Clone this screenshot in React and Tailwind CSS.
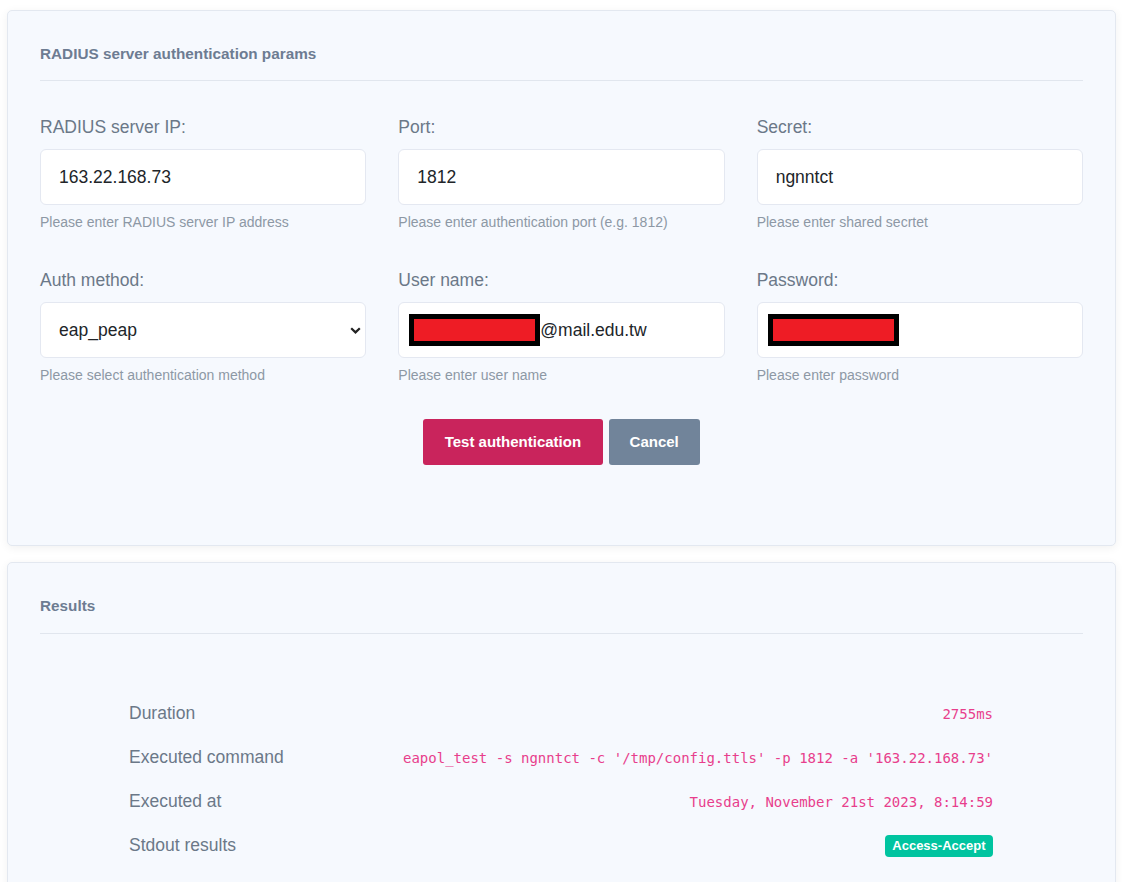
import { useState } from "react";

const FIELDS = [
  { key: "ip", label: "RADIUS server IP:", value: "163.22.168.73", help: "Please enter RADIUS server IP address" },
  { key: "port", label: "Port:", value: "1812", help: "Please enter authentication port (e.g. 1812)" },
  { key: "secret", label: "Secret:", value: "ngnntct", help: "Please enter shared secrtet" },
  { key: "method", label: "Auth method:", value: "eap_peap", help: "Please select authentication method", select: true },
  { key: "user", label: "User name:", value: "@mail.edu.tw", help: "Please enter user name", redacted: true },
  { key: "pass", label: "Password:", value: "", help: "Please enter password", redacted: true },
];

const RESULTS = [
  { label: "Duration", value: "2755ms" },
  { label: "Executed command", value: "eapol_test -s ngnntct -c '/tmp/config.ttls' -p 1812 -a '163.22.168.73'" },
  { label: "Executed at", value: "Tuesday, November 21st 2023, 8:14:59" },
  { label: "Stdout results", badge: "Access-Accept" },
];

function Redacted() {
  return <span className="inline-block w-[131px] h-[32px] border-[5px] border-black bg-[#ee1c25]" />;
}

function Field({ field }) {
  return (
    <div>
      <label className="block text-[17.5px] leading-[26px] text-[#6b7888]">{field.label}</label>
      {field.select ? (
        <div className="relative mt-[9px]">
          <select
            defaultValue={field.value}
            className="w-full h-[56px] appearance-none rounded-[6px] border border-[#e4e8f1] bg-white pl-[18px] text-[17.5px] text-[#212529] outline-none"
          >
            <option value="eap_peap">eap_peap</option>
            <option value="eap_ttls">eap_ttls</option>
            <option value="pap">pap</option>
          </select>
          <svg className="absolute right-[5px] top-[25px] pointer-events-none" width="11" height="7" viewBox="0 0 11 7" fill="none">
            <path d="M1.2 1.2L5.5 5.4L9.8 1.2" stroke="#222" strokeWidth="2.2" />
          </svg>
        </div>
      ) : (
        <div className="mt-[9px] h-[56px] flex items-center rounded-[6px] border border-[#e4e8f1] bg-white text-[17.5px] text-[#212529]">
          {field.redacted ? (
            <div className="flex items-center pl-[10px]">
              <Redacted />
              <span>{field.value}</span>
            </div>
          ) : (
            <span className="pl-[18px]">{field.value}</span>
          )}
        </div>
      )}
      <p className="mt-[7px] text-[14px] leading-[21px] text-[#8d98a5]">{field.help}</p>
    </div>
  );
}

export default function App() {
  const [ran, setRan] = useState(true);

  return (
    <div className="min-h-screen bg-white pl-[7px] pr-[6px] pt-[10px] pb-[20px] font-['Liberation_Sans',Arial,sans-serif]">
      <section className="rounded-[5px] border border-[#e3e8f0] bg-[#f6f9fe] shadow-[0_2px_10px_rgba(0,0,0,0.06)] px-[32px] pt-[32px] pb-[80px]">
        <h2 className="text-[15.3px] leading-[22px] font-bold text-[#6d7c92]">RADIUS server authentication params</h2>
        <div className="mt-[15px] h-px bg-[#e1e6ee]" />

        <div className="mt-[33px] grid grid-cols-3 gap-x-[32px] gap-y-[34px]">
          {FIELDS.map(f => <Field key={f.key} field={f} />)}
        </div>

        <div className="mt-[33px] flex justify-center gap-[6px]">
          <button onClick={() => setRan(true)} className="h-[46px] px-[21.5px] rounded-[3px] bg-[#c9245c] text-white text-[15px] font-bold">
            Test authentication
          </button>
          <button onClick={() => setRan(false)} className="h-[46px] px-[21px] rounded-[3px] bg-[#71849a] text-white text-[15px] font-bold">
            Cancel
          </button>
        </div>
      </section>

      <section className="mt-[16px] rounded-[5px] border border-[#e3e8f0] bg-[#f6f9fe] shadow-[0_2px_10px_rgba(0,0,0,0.06)] px-[32px] pt-[32px] pb-[32px]">
        <h2 className="text-[15.3px] leading-[22px] font-bold text-[#6d7c92]">Results</h2>
        <div className="mt-[16px] h-px bg-[#e1e6ee]" />

        {ran && (
          <div className="mt-[57px] pl-[89px] pr-[90px]">
            {RESULTS.map(r => (
              <div key={r.label} className="h-[44px] flex items-center justify-between">
                <span className="text-[17.5px] leading-[26px] text-[#6b7888]">{r.label}</span>
                {r.badge ? (
                  <span className="mt-[2px] h-[22px] flex items-center px-[7.5px] rounded-[4px] bg-[#00c4a0] text-white text-[13px] font-bold">
                    {r.badge}
                  </span>
                ) : (
                  <code className="pt-[3px] text-[14px] text-[#e83e8c] font-['DejaVu_Sans_Mono','Liberation_Mono',monospace]">{r.value}</code>
                )}
              </div>
            ))}
          </div>
        )}
      </section>
    </div>
  );
}
